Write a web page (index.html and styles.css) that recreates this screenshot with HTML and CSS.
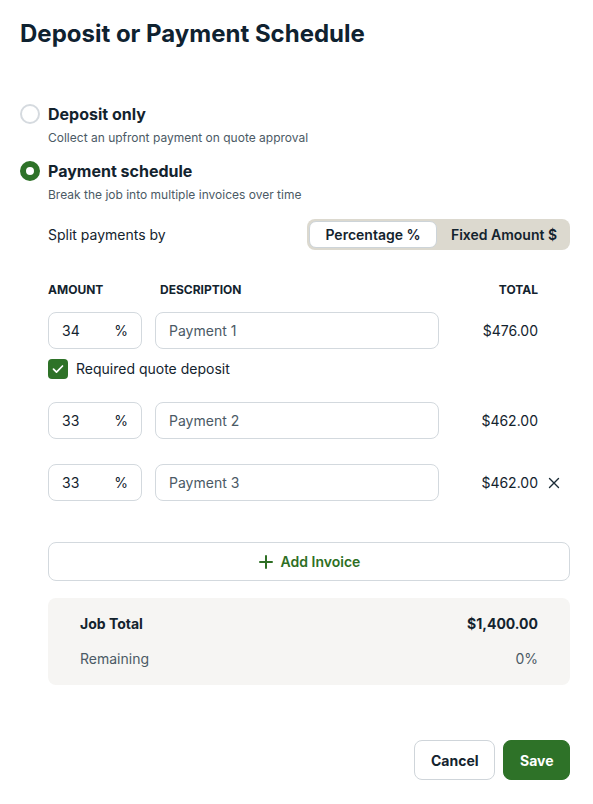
FILE: index.html
```html
<!DOCTYPE html>
<html>

<head>
    <meta charset="UTF-8">
    <title>Deposit or Payment Schedule</title>
    <link rel="stylesheet" href="styles.css">
</head>

<body>
    <div class="dialog">
        <h1 class="title">Deposit or Payment Schedule</h1>

        <div class="option">
            <span class="radio"></span>
            <span class="option-label">Deposit only</span>
        </div>
        <p class="option-sub">Collect an upfront payment on quote approval</p>

        <div class="option option-second">
            <span class="radio radio-on"></span>
            <span class="option-label">Payment schedule</span>
        </div>
        <p class="option-sub">Break the job into multiple invoices over time</p>

        <div class="schedule">
            <div class="split-row">
                <span>Split payments by</span>
                <div class="segmented">
                    <span class="segment segment-active">Percentage %</span>
                    <span class="segment">Fixed Amount $</span>
                </div>
            </div>

            <div class="row head-row">
                <span class="col-amount">AMOUNT</span>
                <span class="col-desc">DESCRIPTION</span>
                <span class="col-total">TOTAL</span>
                <span class="col-remove"></span>
            </div>

            <div class="row">
                <div class="col-amount field"><span>34</span><span>%</span></div>
                <div class="col-desc field">Payment 1</div>
                <span class="col-total">$476.00</span>
                <span class="col-remove"></span>
            </div>
            <label class="deposit-check">
                <span class="checkbox">
                    <svg width="14" height="14" viewBox="0 0 14 14"><path d="M2.5 7.2l3 3 6-6.2" fill="none" stroke="#fff" stroke-width="1.7" stroke-linecap="round" stroke-linejoin="round"/></svg>
                </span>
                Required quote deposit
            </label>

            <div class="row row-second">
                <div class="col-amount field"><span>33</span><span>%</span></div>
                <div class="col-desc field">Payment 2</div>
                <span class="col-total">$462.00</span>
                <span class="col-remove"></span>
            </div>

            <div class="row row-third">
                <div class="col-amount field"><span>33</span><span>%</span></div>
                <div class="col-desc field">Payment 3</div>
                <span class="col-total">$462.00</span>
                <span class="col-remove">
                    <svg width="12" height="12" viewBox="0 0 12 12"><path d="M1.5 1.5l9 9M10.5 1.5l-9 9" stroke="#1b2b36" stroke-width="1.4" stroke-linecap="round"/></svg>
                </span>
            </div>

            <button type="button" class="add-invoice">
                <svg width="16" height="16" viewBox="0 0 16 16"><path d="M8 2v12M2 8h12" stroke="#2e6f24" stroke-width="2" stroke-linecap="round"/></svg>
                Add Invoice
            </button>

            <div class="summary">
                <div class="summary-row summary-total"><span>Job Total</span><span>$1,400.00</span></div>
                <div class="summary-row summary-rest"><span>Remaining</span><span>0%</span></div>
            </div>
        </div>

        <div class="actions">
            <button type="button" class="btn btn-cancel">Cancel</button>
            <button type="button" class="btn btn-save">Save</button>
        </div>
    </div>
</body>

</html>
```

FILE: styles.css
```css
body {
    margin: 0;
    background-color: #ffffff;
    font-family: Inter, "Liberation Sans", sans-serif;
    color: #13232e;
}

.dialog {
    padding: 18px 23px 24px 20px;
}

.title {
    margin: 0;
    font-size: 24px;
    line-height: 32px;
    font-weight: 700;
    color: #0f2230;
}

.option {
    display: flex;
    align-items: center;
    gap: 8px;
    margin-top: 52px;
    height: 24px;
}

.option-second {
    margin-top: 9px;
}

.radio {
    width: 20px;
    height: 20px;
    box-sizing: border-box;
    border-radius: 50%;
    border: 2px solid #d5dadf;
}

.radio-on {
    border: 6px solid #2e7228;
}

.option-label {
    font-size: 16px;
    font-weight: 700;
}

.option-sub {
    margin: 0;
    padding-left: 28px;
    font-size: 12px;
    line-height: 24px;
    color: #4b5a65;
}

.schedule {
    padding-left: 28px;
}

.split-row {
    display: flex;
    justify-content: space-between;
    align-items: center;
    margin-top: 12px;
    font-size: 14px;
}

.segmented {
    display: flex;
    width: 263px;
    height: 31px;
    box-sizing: border-box;
    padding: 2px;
    border-radius: 8px;
    background-color: #dcd9cf;
}

.segment {
    flex: 1;
    display: flex;
    align-items: center;
    justify-content: center;
    padding-left: 3px;
    font-size: 14px;
    font-weight: 600;
    color: #13232e;
}

.segment-active {
    flex: 0 0 128px;
    box-sizing: border-box;
    padding-left: 0;
    background-color: #ffffff;
    border: 1px solid #cdd4d9;
    border-radius: 7px;
}

.row {
    display: flex;
    align-items: center;
    font-size: 14px;
}

.head-row {
    margin-top: 32px;
    margin-bottom: 14px;
    font-size: 12px;
    font-weight: 700;
    line-height: 16px;
}

.head-row .col-desc {
    margin-left: 18px;
    width: 279px;
}

.row-second {
    margin-top: 23px;
}

.row-third {
    margin-top: 25px;
}

.col-amount {
    width: 94px;
    box-sizing: border-box;
}

.col-desc {
    width: 284px;
    margin-left: 13px;
    box-sizing: border-box;
}

.col-total {
    flex: 1;
    text-align: right;
}

.col-remove {
    width: 32px;
    display: flex;
    justify-content: center;
}

.field {
    height: 37px;
    display: flex;
    align-items: center;
    border: 1px solid #d3d9de;
    border-radius: 8px;
    padding: 0 13px;
}

.col-amount.field {
    justify-content: space-between;
}

.col-desc.field {
    color: #4b5a65;
}

.deposit-check {
    display: flex;
    align-items: center;
    gap: 8px;
    margin-top: 10px;
    font-size: 14px;
    line-height: 20px;
}

.checkbox {
    width: 20px;
    height: 20px;
    border-radius: 4px;
    background-color: #2e7228;
    display: flex;
    align-items: center;
    justify-content: center;
}

.add-invoice {
    display: flex;
    align-items: center;
    justify-content: center;
    gap: 7px;
    width: 100%;
    height: 39px;
    margin-top: 41px;
    background-color: #ffffff;
    border: 1px solid #d3d9de;
    border-radius: 8px;
    font-family: inherit;
    font-size: 14px;
    font-weight: 600;
    color: #2e6f24;
}

.summary {
    margin-top: 17px;
    padding: 16px 32px 16px 32px;
    border-radius: 8px;
    background-color: #f6f5f3;
}

.summary-row {
    display: flex;
    justify-content: space-between;
    font-size: 14px;
    line-height: 20px;
}

.summary-total {
    font-weight: 700;
}

.summary-rest {
    margin-top: 15px;
    color: #4b5a65;
}

.actions {
    display: flex;
    justify-content: flex-end;
    gap: 8px;
    margin-top: 55px;
}

.btn {
    height: 40px;
    border-radius: 8px;
    font-family: inherit;
    font-size: 14px;
    font-weight: 700;
    padding: 0 16px;
}

.btn-cancel {
    width: 81px;
    background-color: #ffffff;
    border: 1px solid #cfd5da;
    color: #13232e;
}

.btn-save {
    width: 67px;
    background-color: #2e7228;
    border: 1px solid #2e7228;
    color: #ffffff;
}
```
